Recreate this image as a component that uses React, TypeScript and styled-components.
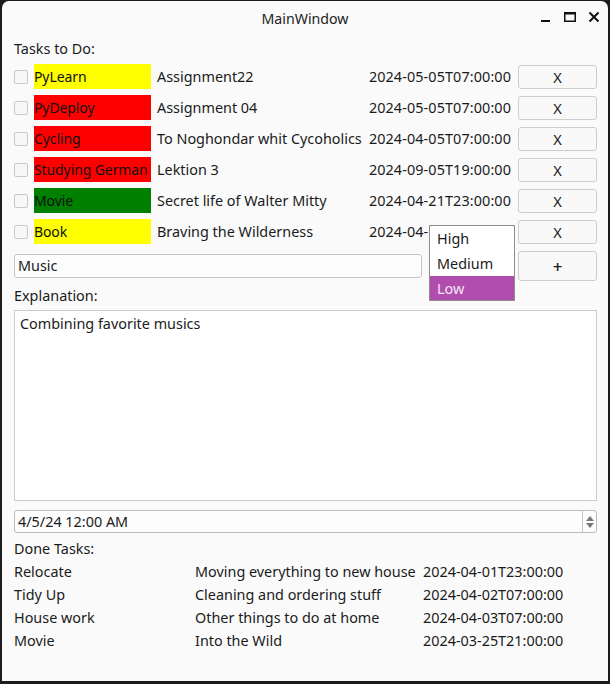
import React from "react";
import styled, { createGlobalStyle } from "styled-components";

const Global = createGlobalStyle`
  html, body { margin: 0; padding: 0; background: #1c1c1c; }
  body { font-family: "Noto Sans", "Open Sans", sans-serif; }
  * { box-sizing: border-box; }
`;

const Frame = styled.div`
  width: 610px;
  height: 684px;
  background: #1c1c1c;
  padding: 1px 2px 3px 2px;
`;

const Window = styled.div`
  width: 100%;
  height: 100%;
  background: #fafafa;
  border-radius: 7px 7px 0 0;
  color: #1b1b1b;
  font-size: 14.4px;
  display: flex;
  flex-direction: column;
`;

const TitleBar = styled.div`
  height: 34px;
  position: relative;
  display: flex;
  align-items: center;
  justify-content: center;
  font-size: 14.2px;
  color: #222;
`;

const Controls = styled.div`
  position: absolute;
  right: 8px;
  top: 10px;
  display: flex;
  gap: 12px;
  align-items: center;
`;

const Content = styled.div`
  padding: 4px 11px 0 12px;
  display: flex;
  flex-direction: column;
`;

const Label = styled.div`
  height: 20px;
  line-height: 20px;
  white-space: nowrap;
`;

const TaskGrid = styled.div`
  margin-top: 5px;
  display: grid;
  grid-template-columns: 14px 117px minmax(0, 1fr) auto 79px;
  column-gap: 6px;
  row-gap: 6px;
  align-items: center;
`;

const Check = styled.div`
  width: 14px;
  height: 14px;
  border: 1px solid #c9c9c9;
  border-radius: 2px;
  background: #f7f7f7;
`;

const Tag = styled.div<{ $bg: string }>`
  height: 25px;
  line-height: 25px;
  background: ${(p) => p.$bg};
  white-space: nowrap;
  overflow: hidden;
  color: #111;
  font-size: 14px;
  letter-spacing: -0.1px;
`;

const Cell = styled.div`
  white-space: nowrap;
`;

const DateCell = styled.div`
  white-space: nowrap;
  margin-right: 1px;
  letter-spacing: 0.1px;
`;

const Btn = styled.div<{ $h?: number }>`
  height: ${(p) => p.$h ?? 24}px;
  border: 1px solid #cdcdcd;
  border-radius: 3px;
  background: #f9f9f9;
  display: flex;
  align-items: center;
  justify-content: center;
  font-size: 14.6px;
`;

const Plus = styled.span`
  font-size: 17px;
  font-weight: 500;
  line-height: 1;
`;

const InputRow = styled.div`
  margin-top: 7px;
  display: grid;
  grid-template-columns: 408px 1fr 79px;
  column-gap: 7px;
  align-items: center;
  position: relative;
`;

const LineInput = styled.div`
  height: 24px;
  border: 1px solid #c6c6c6;
  border-radius: 3px;
  background: #fdfdfd;
  padding-left: 3px;
  line-height: 22px;
`;

const Popup = styled.div`
  position: absolute;
  left: 415px;
  top: -26px;
  width: 86px;
  background: #ffffff;
  border: 1px solid #8d8d8d;
  display: flex;
  flex-direction: column;
`;

const PopItem = styled.div<{ $sel?: boolean }>`
  height: ${(p) => (p.$sel ? 24 : 25)}px;
  line-height: 25px;
  padding-left: 7px;
  background: ${(p) => (p.$sel ? "#b24db0" : "transparent")};
  color: ${(p) => (p.$sel ? "#f4e6f4" : "#1b1b1b")};
`;

const Spacer = styled.div<{ $h: number }>`
  height: ${(p) => p.$h}px;
`;

const TextArea = styled.div`
  margin-top: 4px;
  height: 191px;
  border: 1px solid #cbcbcb;
  background: #ffffff;
  padding: 3px 5px;
  line-height: 20px;
`;

const DateEdit = styled.div`
  margin-top: 9px;
  height: 23px;
  border: 1px solid #bdbdbd;
  border-radius: 3px;
  background: #fdfdfd;
  display: flex;
  align-items: stretch;
`;

const DateText = styled.div`
  flex: 1;
  padding-left: 3px;
  line-height: 21px;
`;

const Spin = styled.div`
  width: 14px;
  border-left: 1px solid #c6c6c6;
  display: flex;
  flex-direction: column;
  align-items: center;
  justify-content: center;
  gap: 2px;
`;

const DoneGrid = styled.div`
  display: grid;
  grid-template-columns: 181px 228px auto;
  grid-auto-rows: 23px;
  align-items: center;
  margin-top: 1px;
`;

const tasks = [
  { name: "PyLearn", color: "#ffff00", desc: "Assignment22", date: "2024-05-05T07:00:00" },
  { name: "PyDeploy", color: "#ff0000", desc: "Assignment 04", date: "2024-05-05T07:00:00" },
  { name: "Cycling", color: "#ff0000", desc: "To Noghondar whit Cycoholics", date: "2024-04-05T07:00:00" },
  { name: "Studying German", color: "#ff0000", desc: "Lektion 3", date: "2024-09-05T19:00:00" },
  { name: "Movie", color: "#008000", desc: "Secret life of Walter Mitty", date: "2024-04-21T23:00:00" },
  { name: "Book", color: "#ffff00", desc: "Braving the Wilderness", date: "2024-04-15T07:00:00" },
];

const done = [
  ["Relocate", "Moving everything to new house", "2024-04-01T23:00:00"],
  ["Tidy Up", "Cleaning and ordering stuff", "2024-04-02T07:00:00"],
  ["House work", "Other things to do at home", "2024-04-03T07:00:00"],
  ["Movie", "Into the Wild", "2024-03-25T21:00:00"],
];

export default function App() {
  return (
    <Frame>
      <Global />
      <Window>
        <TitleBar>
          MainWindow
          <Controls>
            <svg width="12" height="12" viewBox="0 0 12 12">
              <rect x="1" y="9" width="9" height="2" fill="#111" />
            </svg>
            <svg width="12" height="12" viewBox="0 0 12 12">
              <rect x="0.75" y="1.75" width="10.5" height="8.5" fill="none" stroke="#111" strokeWidth="1.5" />
              <rect x="0.75" y="1.5" width="10.5" height="2" fill="#111" />
            </svg>
            <svg width="12" height="12" viewBox="0 0 12 12">
              <path d="M1.5 1.5 L10.5 10.5 M10.5 1.5 L1.5 10.5" stroke="#111" strokeWidth="2" />
            </svg>
          </Controls>
        </TitleBar>
        <Content>
          <Label>Tasks to Do:</Label>
          <TaskGrid>
            {tasks.map((t) => (
              <React.Fragment key={t.name}>
                <Check />
                <Tag $bg={t.color}>{t.name}</Tag>
                <Cell>{t.desc}</Cell>
                <DateCell>{t.date}</DateCell>
                <Btn>X</Btn>
              </React.Fragment>
            ))}
          </TaskGrid>
          <InputRow>
            <LineInput>Music</LineInput>
            <div />
            <Btn $h={30}>
              <Plus>+</Plus>
            </Btn>
            <Popup>
              <PopItem>High</PopItem>
              <PopItem>Medium</PopItem>
              <PopItem $sel>Low</PopItem>
            </Popup>
          </InputRow>
          <Spacer $h={5} />
          <Label>Explanation:</Label>
          <TextArea>Combining favorite musics</TextArea>
          <DateEdit>
            <DateText>4/5/24 12:00 AM</DateText>
            <Spin>
              <svg width="8" height="5" viewBox="0 0 8 5">
                <path d="M0 5 L4 0 L8 5 Z" fill="#777" />
              </svg>
              <svg width="8" height="5" viewBox="0 0 8 5">
                <path d="M0 0 L4 5 L8 0 Z" fill="#777" />
              </svg>
            </Spin>
          </DateEdit>
          <Spacer $h={6} />
          <Label>Done Tasks:</Label>
          <DoneGrid>
            {done.map((d) => (
              <React.Fragment key={d[0]}>
                <Cell>{d[0]}</Cell>
                <Cell>{d[1]}</Cell>
                <Cell>{d[2]}</Cell>
              </React.Fragment>
            ))}
          </DoneGrid>
        </Content>
      </Window>
    </Frame>
  );
}
